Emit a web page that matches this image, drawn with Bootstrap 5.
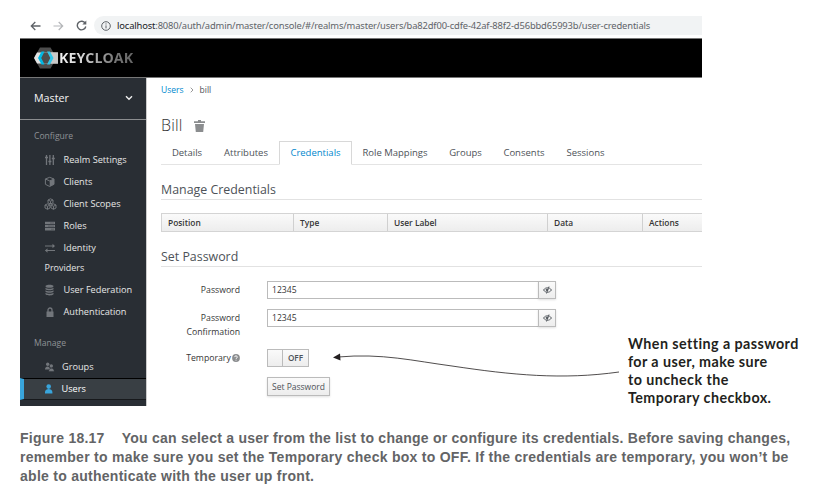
<!DOCTYPE html>
<html lang="en">
<head>
<meta charset="utf-8">
<meta name="viewport" content="width=device-width, initial-scale=1">
<title>Keycloak user credentials</title>
<link href="https://cdn.jsdelivr.net/npm/bootstrap@5.3.0/dist/css/bootstrap.min.css" rel="stylesheet">
<style>
body{font-family:"Open Sans","Noto Sans",sans-serif;font-size:9px;line-height:14px;color:#4d5258;background:#fff;overflow:hidden}
.figure-page{width:838px;height:501px;padding:15px 0 0 20px}
.shot{width:682px;height:391px}
.urlbar{height:24px;padding-bottom:3px;border-bottom:1px solid #777;padding-top:1px}
.nav-icons{width:74px;padding-left:10px;gap:12px}
.address{background:#f1f3f4;border-radius:10px 0 0 10px;padding-left:7px;gap:6px;font:9.4px/18px "Noto Sans",sans-serif;color:#5f6368;white-space:nowrap}
.address b{font-weight:400;color:#202124}
.address .url{letter-spacing:-.15px}
.brandbar{height:39px;background:#000;padding-left:14px;border-bottom:1px solid #777}
.brand-word{font:700 14.2px/20px "Open Sans",sans-serif;letter-spacing:.05px;background:linear-gradient(90deg,#f2f2f2,#cfcfcf 35%,#777 75%,#666);-webkit-background-clip:text;background-clip:text;color:transparent}
.side{width:127px;background:#292e34;border-right:1px solid #ccc;color:#e4e4e4;font-size:9.2px;height:328px;overflow:hidden}
.realm{height:42px;border-bottom:1px solid #8b8d8f;padding:0 13px 1px 14px;font-size:10.7px;color:#f5f5f5}
.side-title{height:16px;line-height:16px;padding-left:14px;color:#8f9296;font-size:8.6px}
.side-item{height:22px;padding-left:24px;white-space:nowrap;color:#e6e6e6;text-decoration:none}
.side-item svg{width:13px;height:12px;margin-right:6.500px;flex:none;color:#72767b}
.side-first{margin-top:5px}
.side-cont{height:18px;line-height:18px;padding-left:24.500px;font-size:9px}
.side-item.current{background:#393f44;border-top:1px solid #000;border-bottom:1px solid #17191c;border-left:4px solid #39a5dc;padding-left:20px;color:#fff}
.side-item.current svg{color:#39a5dc;margin-right:4.500px}
.side-uf{margin-top:2px}
.side-manage{margin-top:12px}
.side-groups{margin-top:5px}
.side-groups svg{margin-right:5px}
.main-col{padding-left:14px}
.crumbs{height:24px;font-size:8.5px;gap:6px}
.crumbs .crumb-link{color:#0088ce;text-decoration:none}
.page-title{height:39px;padding-top:9px;gap:11px;font-size:16px;font-weight:300;color:#333}
.page-title .who{letter-spacing:.2px}
.tabs{height:24px;border-bottom:1px solid #e4e4e4;flex-wrap:nowrap}
.tabs .nav-link{border:1px solid transparent;border-radius:0;height:24px;padding:0;line-height:22px;text-align:center;color:#4d5258;font-size:9.5px;white-space:nowrap}
.tabs .nav-link.active{border-color:#d8d8d8 #d8d8d8 #fff;color:#0088ce}
.tab-52{width:52px}.tab-55{width:55px}.tab-61{width:61px}.tab-62{width:62px}.tab-66{width:66px}.tab-73{width:73px}.tab-86{width:86px}
.section-head{height:35px;padding-top:18px;line-height:14px;font-size:12.4px;color:#4d5258;border-bottom:1px solid #e2e2e2;margin:0;font-weight:400;letter-spacing:0}
.grid-head{height:19px;margin-top:13px;border:1px solid #d4d4d4;border-right:0;background:linear-gradient(#fafafa,#ededed);font-size:8.4px;font-weight:600;color:#363636}
.grid-head div{line-height:17px;padding-left:6px;border-right:1px solid #d0d0d0;flex:none}
.grid-head div:last-child{border:0}
.gc-pos{width:132px}.gc-type{width:94px}.gc-label{width:160px}.gc-data{width:95px}
.row-pass{margin-top:14px;height:28px}
.row-confirm{height:40px}
.row-temp{height:28px}
.form-label{width:79px;margin:0 27px 0 0;text-align:right;font-size:8.700px;line-height:14px;color:#363636;padding-top:2px}
.form-label svg{vertical-align:-1px;margin-left:-1px}
.input-group{width:289px;height:18px;flex-wrap:nowrap}
.input-group .form-control{border:1px solid #bbb;border-radius:0;font-size:8.6px;line-height:14px;padding:0 4px;height:18px;min-height:0;color:#363636}
.input-group .btn,.plain-btn,.switch-off{background:linear-gradient(#fafafa,#ededed);border:1px solid #bbb;border-radius:0;box-shadow:0 1px 2px rgba(0,0,0,.12);padding:0;color:#4d5258}
.input-group .btn{width:18px;height:18px;display:flex;align-items:center;justify-content:center}
.switch-off{width:42px;height:18px;box-shadow:none;line-height:16px;font-size:8.2px;font-weight:600}
.switch-off i{width:15px;border-right:1px solid #bbb}
.plain-btn{width:63px;height:19px;font-size:8.5px;line-height:16px}
.arrow{left:332px;top:345px}
.callout-note{left:628px;top:335px;font:700 14.3px/18.1px Lato,"Open Sans",sans-serif;letter-spacing:.43px;color:#231f20;white-space:nowrap}
.callout-note span,.fig-caption span{display:block}
.fig-caption{margin-top:23px;font:700 14px/19px "Liberation Sans",Arial,sans-serif;letter-spacing:.27px;color:#636466;white-space:nowrap}
.fig-caption .first-line{letter-spacing:.245px}
.fig-caption em{font-style:normal;margin-right:17px}
</style>
<script src="https://cdn.jsdelivr.net/npm/bootstrap@5.3.0/dist/js/bootstrap.bundle.min.js"></script>
</head>
<body>
<div class="figure-page position-relative">
  <div class="shot">
    <div class="urlbar d-flex">
      <div class="nav-icons d-flex align-items-center">
        <svg width="11" height="10" viewBox="0 0 11 10" fill="none" stroke="#5f6368" stroke-width="1.3"><path d="M10.5 5H1.5M5.3 1L1.3 5l4 4"/></svg>
        <svg width="11" height="10" viewBox="0 0 11 10" fill="none" stroke="#b4b6b9" stroke-width="1.2"><path d="M.5 5h9M5.7 1l4 4-4 4"/></svg>
        <svg width="11" height="11" viewBox="0 0 11 11" fill="none" stroke="#5f6368" stroke-width="1.4"><path d="M9.3 3.3A4.3 4.3 0 1 0 9.8 6.5"/><path d="M10.3.4v4H6.3z" fill="#5f6368" stroke="none"/></svg>
      </div>
      <div class="address d-flex align-items-center flex-grow-1">
        <svg width="10" height="10" viewBox="0 0 10 10" fill="none" stroke="#5f6368"><circle cx="5" cy="5" r="4.3"/><path d="M5 4.4v3M5 2.4v1.1"/></svg>
        <span class="url"><b>localhost</b>:8080/auth/admin/master/console/#/realms/master/users/ba82df00-cdfe-42af-88f2-d56bbd65993b/user-credentials</span>
      </div>
    </div>
    <header class="brandbar d-flex align-items-center">
      <svg width="25" height="22" viewBox="0 0 25 22"><path d="M6 .5h10.500l6 10.500-6 10.500H6L0 11z" fill="#4d4d4d"/><path d="M3 5.5h21v11H3L0 11z" fill="#e4e4e4"/><path d="M17 5.500h7v11h-7z" fill="#c8c8c8"/><path d="M9.500 5.500h5L18 11l-3.500 5.500h-5L6.500 11z" fill="#4d4d4d"/><path d="M7.500 4.500h3L7.200 11l3.300 6.500h-3L4 11z" fill="#00b8e3"/><path d="M13 4.500h3l3.500 6.500-3.500 6.500h-3l3.300-6.500z" fill="#33c6e9"/></svg>
      <span class="brand-word">KEYCLOAK</span>
    </header>
    <div class="d-flex">
      <nav class="side flex-shrink-0">
        <div class="realm d-flex align-items-center justify-content-between"><span>Master</span><svg width="8" height="6" viewBox="0 0 8 6" fill="none" stroke="#eee" stroke-width="1.400"><path d="M1 1.300l3 3 3-3"/></svg></div>
        <div class="side-title mt-2">Configure</div>
        <a class="side-item side-first d-flex align-items-center"><svg viewBox="0 0 13 12" stroke="currentColor" stroke-width="1.300" fill="none"><path d="M2.500 1v10M5.900 1v10M9.300 1v10M1 3.500h3M4.400 7.500h3M7.800 4.500h3"/></svg><span>Realm Settings</span></a>
        <a class="side-item d-flex align-items-center"><svg viewBox="0 0 13 12"><path d="M5.700 1.300L10 3v5.300l-4.300 2.200L1.400 8.300V3z" fill="none" stroke="currentColor"/><path d="M5.700 4.900L10 3v5.300l-4.300 2.200z" fill="currentColor"/><path d="M1.400 3l4.300 1.900L10 3" fill="none" stroke="currentColor"/></svg><span>Clients</span></a>
        <a class="side-item d-flex align-items-center"><svg viewBox="0 0 13 12" fill="none" stroke="currentColor"><path d="M6.500.8L9 2v2.800L6.500 6 4 4.800V2zM3.500 5.800L6 7v3l-2.500 1.300L1 10V7zM9.500 5.800L12 7v3l-2.500 1.300L7 10V7zM4 2l2.500 1.200L9 2M6.500 3.200V6M1 7l2.500 1.300L6 7M3.500 8.300v3M7 7l2.500 1.300L12 7M9.500 8.300v3"/></svg><span>Client Scopes</span></a>
        <a class="side-item d-flex align-items-center"><svg viewBox="0 0 13 12"><path d="M1 1.800h10v2.400H1zM1 4.900h10v2.400H1zM1 8h10v2.400H1z" fill="currentColor"/><path d="M6 3h4M4 6.100h6M7 9.200h3" stroke="#4a4f55" stroke-width=".7"/></svg><span>Roles</span></a>
        <a class="side-item d-flex align-items-center"><svg viewBox="0 0 13 12" fill="none" stroke="currentColor"><path d="M1 4h9M1.500 8.500H11"/><path d="M8.500 1.800L11 4 8.500 6.200zM3.500 6.300L1 8.500l2.500 2.200z" fill="currentColor" stroke="none"/></svg><span>Identity</span></a>
        <div class="side-cont">Providers</div>
        <a class="side-item side-uf d-flex align-items-center"><svg viewBox="0 0 13 12"><path d="M1.500 2.300c0-2 8-2 8 0s-8 2-8 0M1.500 3.800c1.500 1.300 6.500 1.300 8 0v1.400c-1.500 1.400-6.500 1.400-8 0zM1.500 6.300c1.500 1.300 6.500 1.300 8 0v1.400c-1.500 1.400-6.500 1.400-8 0zM1.500 8.800c1.500 1.300 6.500 1.300 8 0v1.400c-1.500 1.600-6.500 1.600-8 0z" fill="currentColor"/></svg><span>User Federation</span></a>
        <a class="side-item d-flex align-items-center"><svg viewBox="0 0 13 12"><path d="M2.500 5.500h7V11h-7z" fill="currentColor"/><path d="M4 6V4a2 2 0 0 1 4 0v2" fill="none" stroke="currentColor" stroke-width="1.300"/></svg><span>Authentication</span></a>
        <div class="side-title side-manage">Manage</div>
        <a class="side-item side-groups d-flex align-items-center"><svg viewBox="0 0 13 12" fill="currentColor"><circle cx="3.700" cy="3.300" r="1.700"/><path d="M1 8.500c0-4 5-4 5 0z"/><circle cx="7.300" cy="5" r="1.700"/><path d="M4.700 10.500c0-4.500 5.500-4.500 5.500 0z" stroke="#292e34" stroke-width=".4"/></svg><span>Groups</span></a>
        <a class="side-item current d-flex align-items-center"><svg viewBox="0 0 13 12" fill="currentColor"><circle cx="4.700" cy="3.600" r="2.300"/><path d="M1 10.500V9c0-2 2-3 3.700-3s3.700 1 3.700 3v1.500z"/></svg><span>Users</span></a>
      </nav>
      <main class="main-col flex-grow-1">
        <div class="crumbs d-flex align-items-center"><a class="crumb-link">Users</a><svg width="4" height="6" viewBox="0 0 4 6" fill="none" stroke="#999"><path d="M.7.7L3 3 .7 5.300"/></svg><span>bill</span></div>
        <h1 class="page-title d-flex align-items-center m-0"><span class="who">Bill</span><svg width="11" height="12" viewBox="0 0 11 12" fill="#8b8d8f"><path d="M4 0h3v1.300h4V3H0V1.300h4zM1 4h9l-.8 8H1.800z"/></svg></h1>
        <ul class="nav tabs">
          <li><a class="nav-link tab-52">Details</a></li>
          <li><a class="nav-link tab-66">Attributes</a></li>
          <li><a class="nav-link tab-73 active">Credentials</a></li>
          <li><a class="nav-link tab-86">Role Mappings</a></li>
          <li><a class="nav-link tab-55">Groups</a></li>
          <li><a class="nav-link tab-62">Consents</a></li>
          <li><a class="nav-link tab-61">Sessions</a></li>
        </ul>
        <h2 class="section-head">Manage Credentials</h2>
        <div class="grid-head d-flex">
          <div class="gc-pos">Position</div><div class="gc-type">Type</div><div class="gc-label">User Label</div><div class="gc-data">Data</div><div>Actions</div>
        </div>
        <h2 class="section-head">Set Password</h2>
        <form>
          <div class="d-flex row-pass"><label class="form-label">Password</label>
            <div class="input-group"><input class="form-control" value="12345"><button type="button" class="btn" aria-label="Show"><svg width="9" height="8" viewBox="0 0 9 8" fill="none" stroke="#4d5258" stroke-width=".9"><path d="M.5 4C2.500 1 6.500 1 8.500 4 6.500 7 2.500 7 .5 4zM6 .5L3.500 7.500"/><circle cx="4" cy="3.800" r=".9" fill="#4d5258"/></svg></button></div></div>
          <div class="d-flex row-confirm"><label class="form-label">Password Confirmation</label>
            <div class="input-group"><input class="form-control" value="12345"><button type="button" class="btn" aria-label="Show"><svg width="9" height="8" viewBox="0 0 9 8" fill="none" stroke="#4d5258" stroke-width=".9"><path d="M.5 4C2.500 1 6.500 1 8.500 4 6.500 7 2.500 7 .5 4zM6 .5L3.500 7.500"/><circle cx="4" cy="3.800" r=".9" fill="#4d5258"/></svg></button></div></div>
          <div class="d-flex row-temp"><label class="form-label">Temporary <svg width="8" height="8" viewBox="0 0 7 7"><circle cx="3.500" cy="3.500" r="3.400" fill="#8b8d8f"/><path d="M2.300 2.700c0-1.500 2.400-1.400 2.400 0 0 .8-1.200.8-1.200 1.600M3.500 5v.8" fill="none" stroke="#fff" stroke-width=".8"/></svg></label>
            <div class="switch-off d-flex"><i></i><span class="flex-grow-1 text-center">OFF</span></div></div>
          <div class="d-flex"><span class="form-label"></span><button type="button" class="btn plain-btn">Set Password</button></div>
        </form>
      </main>
    </div>
  </div>
  <svg class="arrow position-absolute" width="292" height="36" viewBox="0 0 292 36"><path d="M6 12C50 8 82 16 120 21c60 9 110 14 167 6" fill="none" stroke="#231f20" stroke-width=".8"/><path d="M1 12.500l7-4 .5 7z" fill="#231f20"/></svg>
  <div class="callout-note position-absolute"><span>When setting a password</span><span>for a user, make sure</span><span>to uncheck the</span><span>Temporary checkbox.</span></div>
  <div class="fig-caption"><span class="first-line"><em>Figure 18.17</em>You can select a user from the list to change or configure its credentials. Before saving changes,</span><span>remember to make sure you set the Temporary check box to OFF. If the credentials are temporary, you won’t be</span><span>able to authenticate with the user up front.</span></div>
</div>
</body>
</html>
